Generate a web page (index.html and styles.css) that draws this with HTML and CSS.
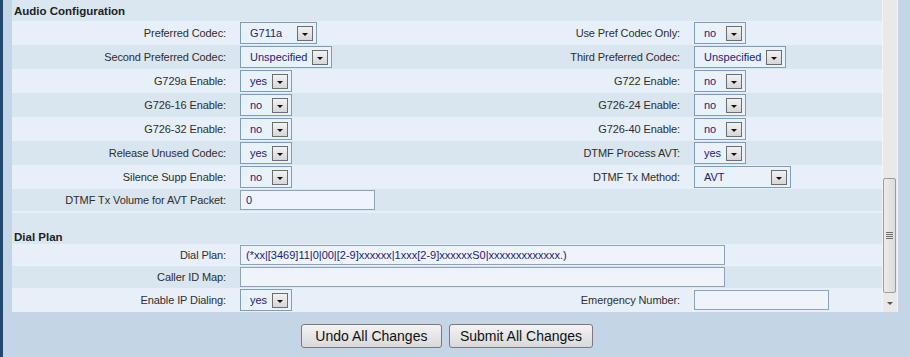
FILE: index.html
```html
<!DOCTYPE html>
<html lang="en">
  <head>
    <meta charset="UTF-8" />
    <title>Voice - Line 1</title>
    <link rel="stylesheet" href="styles.css">
  </head>
  <body>
    <div class="page">
      <div class="frame">
        <div class="panel">
          <div class="section">Audio Configuration</div>

          <div class="row light">
            <label>Preferred Codec:</label>
            <div class="val"><span class="sel codec"><span>G711a</span><i></i></span></div>
            <label>Use Pref Codec Only:</label>
            <div class="val"><span class="sel yn"><span>no</span><i></i></span></div>
          </div>
          <div class="row dark">
            <label>Second Preferred Codec:</label>
            <div class="val"><span class="sel wide"><span>Unspecified</span><i></i></span></div>
            <label>Third Preferred Codec:</label>
            <div class="val"><span class="sel wide"><span>Unspecified</span><i></i></span></div>
          </div>
          <div class="row light">
            <label>G729a Enable:</label>
            <div class="val"><span class="sel yn"><span>yes</span><i></i></span></div>
            <label>G722 Enable:</label>
            <div class="val"><span class="sel yn"><span>no</span><i></i></span></div>
          </div>
          <div class="row dark">
            <label>G726-16 Enable:</label>
            <div class="val"><span class="sel yn"><span>no</span><i></i></span></div>
            <label>G726-24 Enable:</label>
            <div class="val"><span class="sel yn"><span>no</span><i></i></span></div>
          </div>
          <div class="row light">
            <label>G726-32 Enable:</label>
            <div class="val"><span class="sel yn"><span>no</span><i></i></span></div>
            <label>G726-40 Enable:</label>
            <div class="val"><span class="sel yn"><span>no</span><i></i></span></div>
          </div>
          <div class="row dark">
            <label>Release Unused Codec:</label>
            <div class="val"><span class="sel yn"><span>yes</span><i></i></span></div>
            <label>DTMF Process AVT:</label>
            <div class="val"><span class="sel yn"><span>yes</span><i></i></span></div>
          </div>
          <div class="row light">
            <label>Silence Supp Enable:</label>
            <div class="val"><span class="sel yn"><span>no</span><i></i></span></div>
            <label>DTMF Tx Method:</label>
            <div class="val"><span class="sel method"><span>AVT</span><i></i></span></div>
          </div>
          <div class="row dark">
            <label>DTMF Tx Volume for AVT Packet:</label>
            <div class="val"><input class="txt short" type="text" value="0" /></div>
          </div>

          <div class="gap"></div>
          <div class="section dial">Dial Plan</div>

          <div class="row light">
            <label>Dial Plan:</label>
            <div class="val span3"><input class="txt long" type="text" value="(*xx|[3469]11|0|00|[2-9]xxxxxx|1xxx[2-9]xxxxxxS0|xxxxxxxxxxxxx.)" /></div>
          </div>
          <div class="row dark">
            <label>Caller ID Map:</label>
            <div class="val span3"><input class="txt long" type="text" value="" /></div>
          </div>
          <div class="row light">
            <label>Enable IP Dialing:</label>
            <div class="val"><span class="sel yn"><span>yes</span><i></i></span></div>
            <label>Emergency Number:</label>
            <div class="val"><input class="txt short" type="text" value="" /></div>
          </div>
        </div>

        <div class="scrollbar">
          <div class="track"></div>
          <div class="thumb"><b></b><b></b><b></b><b></b></div>
          <div class="down"></div>
        </div>
      </div>

      <div class="actions">
        <button class="btn">Undo All Changes</button>
        <button class="btn">Submit All Changes</button>
      </div>
    </div>
  </body>
</html>
```

FILE: styles.css
```css
* {
  margin: 0;
  padding: 0;
  box-sizing: border-box;
  font-family: "Liberation Sans", Arial, sans-serif;
}
body {
  background-color: #c4d6e5;
  border-left: 3px solid #24476d;
  height: 357px;
  overflow: hidden;
}
.page {
  padding-left: 9px;
  width: 898px;
}
.frame {
  display: flex;
}
.panel {
  width: 870px;
  background-color: #dae6f0;
}
.section {
  height: 21px;
  padding: 5px 0 0 2px;
  font-size: 11.5px;
  font-weight: bold;
  color: #222;
  background-color: #dae6f0;
}
.section.dial {
  height: 31px;
  display: flex;
  align-items: flex-end;
  padding-bottom: 1px;
}
.gap {
  height: 2px;
  background-color: #e7f0f8;
}
.row {
  display: grid;
  grid-template-columns: 228px 320px 134px 1fr;
  align-items: center;
  padding: 1px 0;
  font-size: 11px;
  color: #2e2e2e;
}
.row.light {
  background-color: #e7f0f8;
}
.row.dark {
  background-color: #d9e5ef;
}
.row label {
  text-align: right;
  padding-right: 14px;
  letter-spacing: -0.1px;
}
.val {
  display: flex;
  align-items: center;
}
.val.span3 {
  grid-column: 2 / 5;
}
.sel {
  display: flex;
  align-items: center;
  justify-content: space-between;
  height: 22px;
  padding: 0 3px 0 9px;
  border: 1px solid #7f9db9;
  background-color: #e9f1f9;
  color: #1d1d78;
  font-size: 11px;
}
.sel i {
  width: 16px;
  height: 15px;
  border: 1px solid #6d6d6d;
  background: linear-gradient(180deg, #f2f2f2 0%, #d6d6d6 100%);
  position: relative;
}
.sel i::after {
  content: "";
  position: absolute;
  left: 4px;
  top: 6px;
  border-left: 3px solid transparent;
  border-right: 3px solid transparent;
  border-top: 3px solid #111;
}
.sel.codec {
  width: 77px;
}
.sel.yn {
  width: 52px;
}
.sel.wide {
  width: 92px;
}
.sel.method {
  width: 97px;
}
.txt {
  height: 20px;
  border: 1px solid #8ea3b9;
  background-color: #eef4f9;
  color: #1d1d78;
  font-size: 11px;
  padding: 0 5px;
  outline: none;
}
.txt.short {
  width: 135px;
}
.txt.long {
  width: 485px;
}
.scrollbar {
  width: 16px;
  height: 312px;
  display: flex;
  flex-direction: column;
  background-color: #e9e9e9;
  border-left: 1px solid #f4f4f4;
  border-right: 1px solid #f4f4f4;
}
.track {
  flex: 1;
}
.thumb {
  height: 115px;
  margin: 0 1px 2px 0;
  border: 1px solid #9c9c9c;
  border-radius: 2px;
  background: linear-gradient(90deg, #ececec 0%, #dcdcdc 100%);
  display: flex;
  flex-direction: column;
  align-items: center;
  justify-content: center;
  gap: 1px;
}
.thumb b {
  width: 7px;
  height: 1px;
  background-color: #6e6e6e;
}
.down {
  height: 17px;
  display: flex;
  align-items: center;
  justify-content: center;
}
.down::after {
  content: "";
  border-left: 3px solid transparent;
  border-right: 3px solid transparent;
  border-top: 3px solid #555;
}
.actions {
  width: 870px;
  display: flex;
  justify-content: center;
  gap: 7px;
  margin-top: 12px;
}
.btn {
  min-width: 141px;
  height: 24px;
  padding: 0 10px;
  font-size: 14px;
  color: #111;
  border: 1px solid #7a7a7a;
  border-radius: 3px;
  background: linear-gradient(180deg, #f3f3f3 0%, #e6e6e6 50%, #d9d9d9 100%);
}
```
